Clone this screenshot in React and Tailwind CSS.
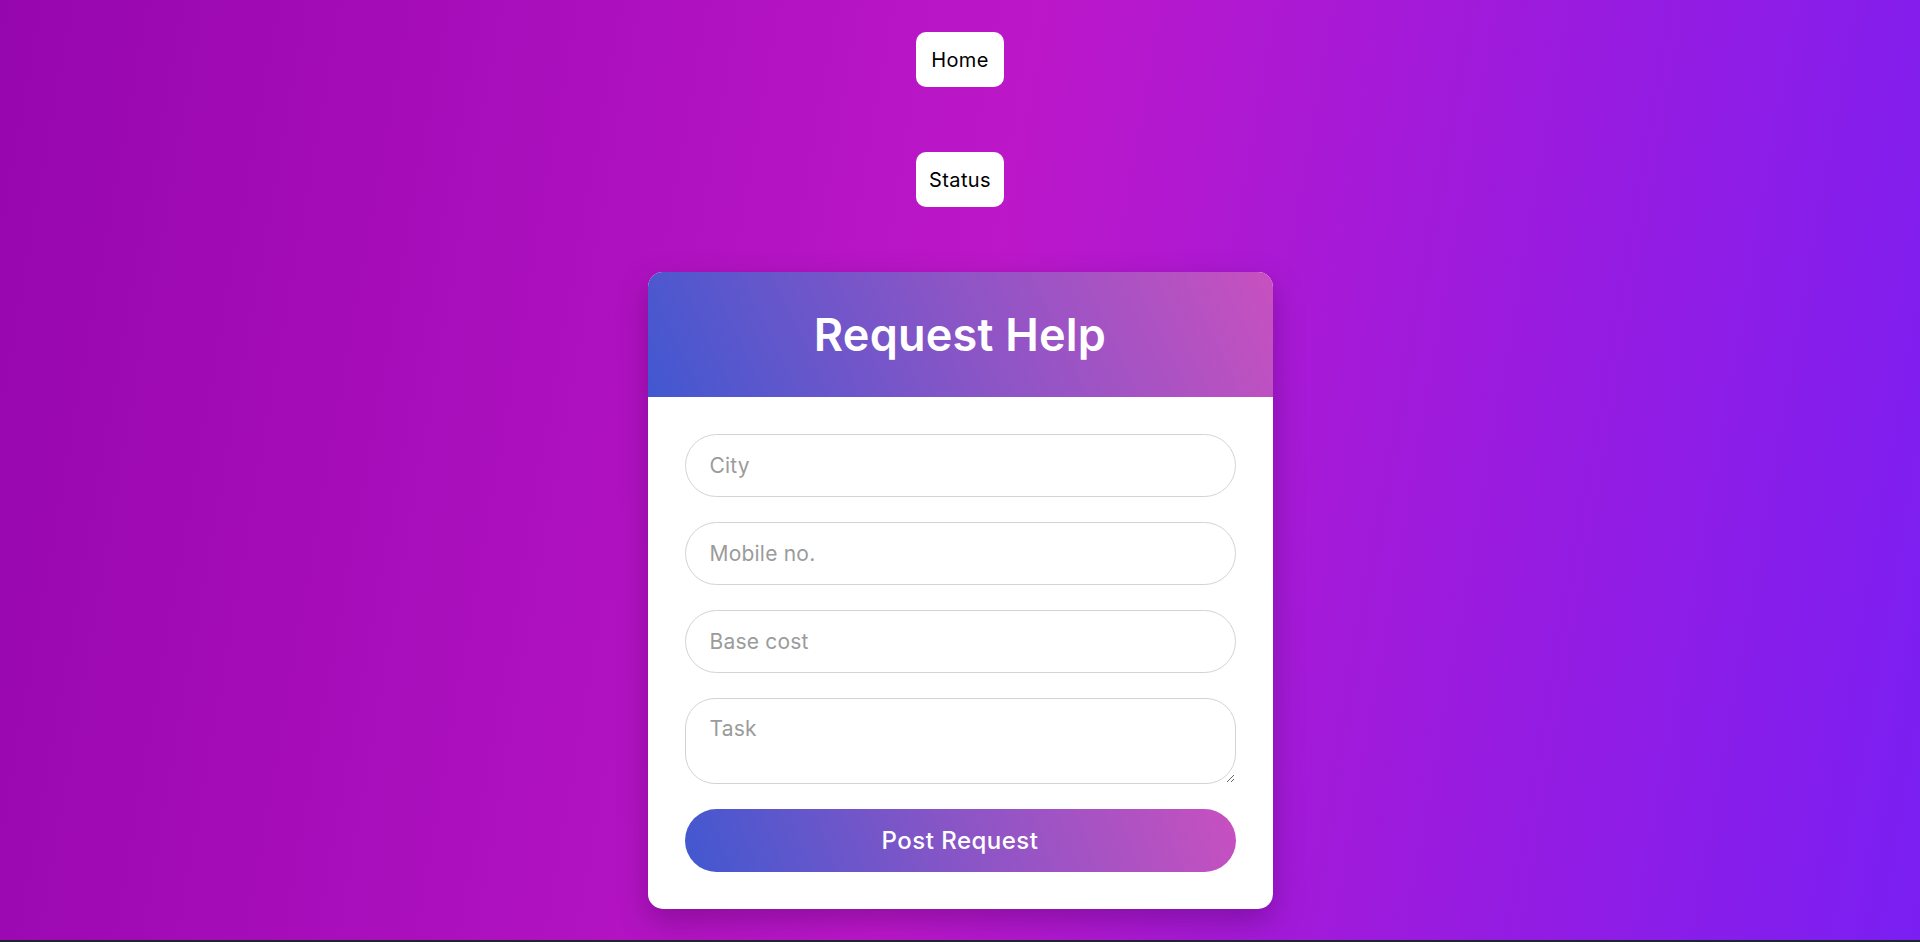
import React from "react";

const font = { fontFamily: "Inter, 'Open Sans', sans-serif" };

function NavButton({ label }) {
  return (
    <button className="h-[55px] w-[88px] rounded-[10px] bg-white text-[20px] tracking-[0.02em] text-black">
      {label}
    </button>
  );
}

function Field({ placeholder }) {
  return (
    <input
      type="text"
      placeholder={placeholder}
      className="h-[63px] w-full rounded-full border border-[#d3d3d3] bg-white px-6 text-[21px] tracking-[0.01em] text-black outline-none placeholder:text-[#9b9b9b]"
    />
  );
}

export default function App() {
  return (
    <div
      style={font}
      className="flex h-[942px] flex-col overflow-hidden bg-[linear-gradient(100deg,#9606ae_0%,#bc17c9_50%,#7a1ff3_100%)]"
    >
      <div className="flex flex-1 flex-col items-center pt-8">
        <NavButton label="Home" />
        <div className="mt-[65px]">
          <NavButton label="Status" />
        </div>

        <div className="mt-[65px] w-[625px] overflow-hidden rounded-[15px] bg-white shadow-[0_12px_30px_rgba(60,0,80,0.35)]">
          <div className="flex h-[125px] items-center justify-center bg-[linear-gradient(65deg,#4158d0_0%,#8a55c6_50%,#c850c0_100%)]">
            <h1 className="text-[45px] font-semibold tracking-[0.005em] text-white">Request Help</h1>
          </div>
          <form className="flex flex-col gap-[25px] px-[37px] py-[37px]">
            <Field placeholder="City" />
            <Field placeholder="Mobile no." />
            <Field placeholder="Base cost" />
            <textarea
              placeholder="Task"
              className="h-[86px] w-full rounded-[30px] border border-[#d3d3d3] bg-white px-6 py-[14px] text-[21px] tracking-[0.01em] text-black outline-none placeholder:text-[#9b9b9b]"
            />
            <button
              type="button"
              className="h-[63px] w-full rounded-full bg-[linear-gradient(70deg,#4158d0_0%,#8a55c6_50%,#c850c0_100%)] text-[24px] font-medium tracking-[0.02em] text-white"
            >
              Post Request
            </button>
          </form>
        </div>
      </div>
      <div className="h-[2px] bg-[#1e2530]" />
    </div>
  );
}
